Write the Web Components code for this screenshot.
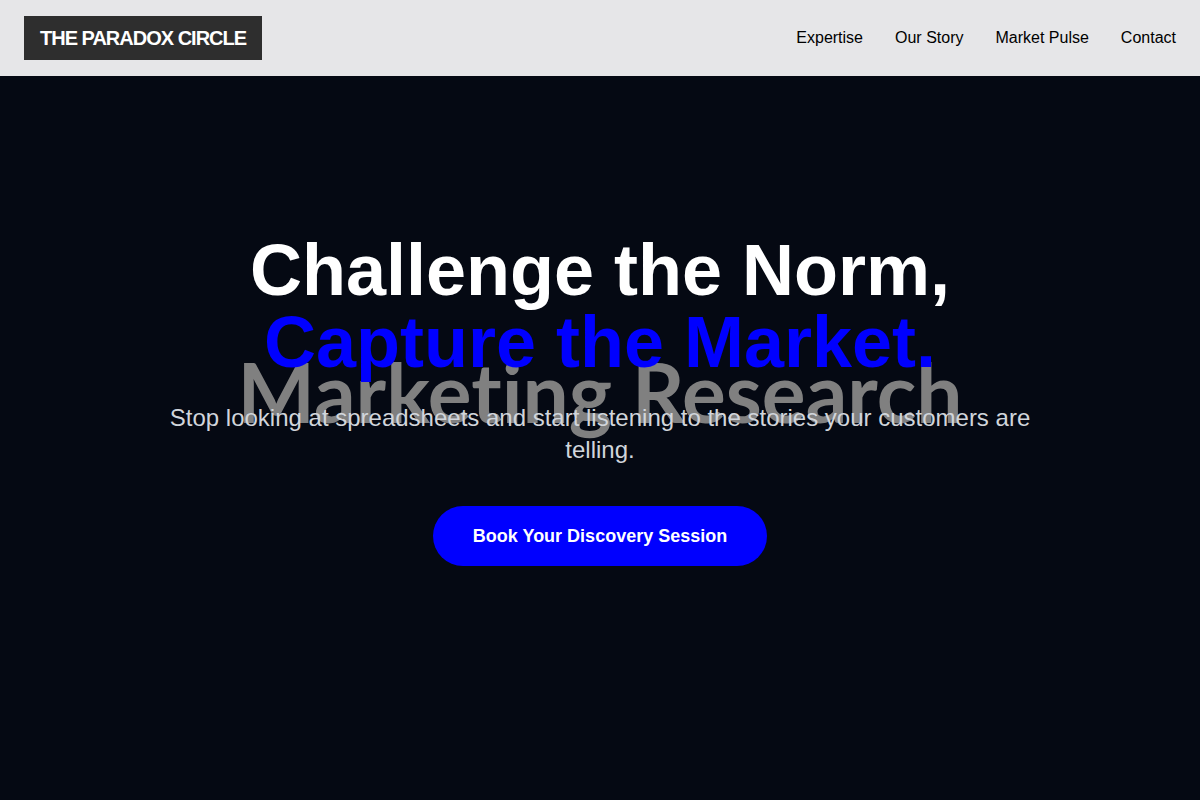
<!DOCTYPE html>
<html lang="en">
<head>
<meta charset="utf-8">
<title>The Paradox Circle</title>
<style>
body { margin: 0; background: #050913; color: #fff; font-family: "Liberation Sans", Arial, sans-serif; }
</style>
</head>
<body>
<site-header>
  <brand-mark slot="brand">THE PARADOX CIRCLE</brand-mark>
  <nav-link href="#expertise">Expertise</nav-link>
  <nav-link href="#story">Our Story</nav-link>
  <nav-link href="#pulse">Market Pulse</nav-link>
  <nav-link href="#contact">Contact</nav-link>
</site-header>
<hero-banner>
  <span slot="backdrop">Marketing Research</span>
  <span slot="title">Challenge the Norm,</span>
  <span slot="accent">Capture the Market.</span>
  <span slot="lead">Stop looking at spreadsheets and start listening to the stories your customers are telling.</span>
  <cta-button slot="action">Book Your Discovery Session</cta-button>
</hero-banner>
<script>
const define = (name, html, setup) => {
  const template = document.createElement("template");
  template.innerHTML = html;
  customElements.define(name, class extends HTMLElement {
    constructor() {
      super();
      this.attachShadow({ mode: "open" }).append(template.content.cloneNode(true));
    }
    connectedCallback() { if (setup) setup(this); }
  });
};

define("site-header", `
<style>
:host { display: block; background: #e6e6e8; color: #000; }
header { display: flex; align-items: center; justify-content: space-between; padding: 16px 24px; }
nav { display: flex; gap: 32px; }
</style>
<header><slot name="brand"></slot><nav aria-label="Main"><slot></slot></nav></header>`);

define("brand-mark", `
<style>
:host { display: block; padding: 8px 16px; background: #2e2e2e; color: #fff; font-size: 20px; line-height: 28px; font-weight: 700; letter-spacing: -1px; }
</style>
<slot></slot>`);

define("nav-link", `
<style>
:host { display: block; font-size: 16px; line-height: 24px; }
a { color: inherit; text-decoration: none; }
</style>
<a><slot></slot></a>`, el => { el.shadowRoot.querySelector("a").href = el.getAttribute("href"); });

define("hero-banner", `
<style>
:host { display: block; }
section { position: relative; display: flex; align-items: center; justify-content: center; box-sizing: border-box; min-height: calc(100vh - 76px); padding: 0 24px 76px; text-align: center; }
.backdrop { position: absolute; inset: 0 0 94px; display: flex; align-items: center; justify-content: center; color: #808080; font: 700 82px/100px Lato, sans-serif; font-variant-ligatures: none; white-space: nowrap; }
.content { position: relative; max-width: 896px; }
h1 { margin: 0 0 24px; font-size: 72px; line-height: 72px; font-weight: 700; }
h1 slot { display: block; }
.accent { color: #00f; }
p { margin: 0 0 40px; color: #d1d5db; font-size: 24px; line-height: 32px; }
</style>
<section>
  <div class="backdrop"><slot name="backdrop"></slot></div>
  <div class="content">
    <h1><slot name="title"></slot><slot class="accent" name="accent"></slot></h1>
    <p><slot name="lead"></slot></p>
    <slot name="action"></slot>
  </div>
</section>`);

define("cta-button", `
<style>
:host { display: flex; justify-content: center; }
button { border: 0; border-radius: 30px; padding: 16px 40px; background: #00f; color: #fff; font: 700 18px/28px "Liberation Sans", Arial, sans-serif; cursor: pointer; }
</style>
<button type="button"><slot></slot></button>`);
</script>
</body>
</html>
